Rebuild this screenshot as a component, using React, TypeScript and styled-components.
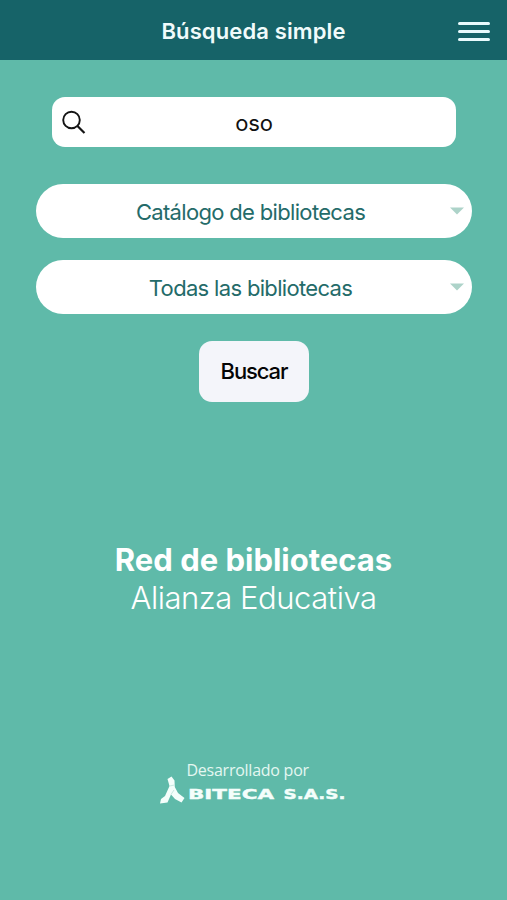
import React from 'react';
import styled, { createGlobalStyle } from 'styled-components';

const GlobalStyle = createGlobalStyle`
  * { box-sizing: border-box; }
  body { margin: 0; background: #5fbaa9; }
`;

const Screen = styled.div`
  width: 100%;
  height: 900px;
  overflow: hidden;
  display: flex;
  flex-direction: column;
  align-items: center;
  background: #5fbaa9;
  font-family: Inter, 'Liberation Sans', sans-serif;
`;

const Header = styled.header`
  width: 100%;
  height: 60px;
  flex: none;
  display: grid;
  grid-template-columns: 66px 1fr 66px;
  align-items: center;
  background: #166368;
  color: #f0fbfb;
`;

const Title = styled.h1`
  grid-column: 2;
  margin: 2px 0 0;
  font-size: 22px;
  line-height: 30px;
  font-weight: 600;
  letter-spacing: 0.12px;
  text-align: center;
  white-space: nowrap;
`;

const MenuButton = styled.button`
  display: flex;
  flex-direction: column;
  gap: 5px;
  width: 32px;
  margin: 2px 0 0 17px;
  padding: 0;
  border: 0;
  background: none;
`;

const MenuLine = styled.span`
  height: 3px;
  border-radius: 1.5px;
  background: #e9fbfd;
`;

const Form = styled.form`
  width: 436px;
  margin-top: 37px;
  display: flex;
  flex-direction: column;
  align-items: center;
`;

const SearchBox = styled.label`
  width: 404px;
  height: 50px;
  display: grid;
  grid-template-columns: 42px 1fr 42px;
  align-items: center;
  border-radius: 13px;
  background: #fff;
`;

const SearchIcon = styled.svg`
  width: 26px;
  height: 26px;
  margin-left: 9px;
`;

const SearchText = styled.span`
  padding: 1px 0 0 1px;
  font-size: 22px;
  color: #111;
  text-align: center;
  letter-spacing: -0.2px;
`;

const Select = styled.button<{ $gap: number }>`
  width: 436px;
  height: 54px;
  margin-top: ${(p) => p.$gap}px;
  padding: 2px 8px 0 0;
  display: grid;
  grid-template-columns: 16px 1fr 14px;
  align-items: center;
  border: 0;
  border-radius: 27px;
  background: #fff;
  color: #246b69;
  font-family: inherit;
  font-size: 22px;
  letter-spacing: -0.67px;
`;

const SelectLabel = styled.span`
  grid-column: 2;
`;

const Caret = styled.svg`
  width: 14px;
  height: 8px;
  margin-top: -3px;
`;

const Submit = styled.button`
  width: 110px;
  height: 61px;
  margin-top: 27px;
  padding: 0 0 2px 1px;
  border: 0;
  border-radius: 13px;
  background: #f4f5fa;
  color: #050505;
  font-family: inherit;
  font-size: 22px;
  font-weight: 500;
  letter-spacing: -1.1px;
`;

const Network = styled.section`
  margin-top: 139px;
  color: #fff;
  text-align: center;
  font-size: 31px;
  line-height: 38px;
  white-space: nowrap;
`;

const NetworkName = styled.div`
  font-weight: 700;
`;

const NetworkOwner = styled.div`
  font-weight: 300;
  letter-spacing: -0.45px;
`;

const Credit = styled.footer`
  width: 186px;
  margin-top: 144px;
  display: flex;
  flex-direction: column;
  color: #e4f7f1;
`;

const CreditText = styled.span`
  margin-left: 26px;
  font-family: 'Open Sans', sans-serif;
  font-size: 16px;
  font-weight: 500;
  letter-spacing: -0.25px;
  line-height: 18px;
  white-space: nowrap;
`;

const Logo = styled.svg`
  width: 186px;
  height: 28px;
  margin-top: -3px;
  overflow: visible;
`;

const Dropdown = ({ label, gap }: { label: string; gap: number }) => (
  <Select type="button" $gap={gap}>
    <SelectLabel>{label}</SelectLabel>
    <Caret viewBox="0 0 14 8">
      <path d="M0 0.5H14L7 7.5Z" fill="#add3c9" />
    </Caret>
  </Select>
);

export default function App() {
  return (
    <>
      <GlobalStyle />
      <Screen>
        <Header>
          <Title>Búsqueda simple</Title>
          <MenuButton aria-label="Menú">
            <MenuLine />
            <MenuLine />
            <MenuLine />
          </MenuButton>
        </Header>
        <Form>
          <SearchBox>
            <SearchIcon viewBox="0 0 26 26" fill="none" stroke="#141414" strokeWidth="1.9">
              <circle cx="10.5" cy="11" r="8.3" />
              <path d="M16.5 17L23.5 24" strokeWidth="2.2" />
            </SearchIcon>
            <SearchText>oso</SearchText>
          </SearchBox>
          <Dropdown label="Catálogo de bibliotecas" gap={37} />
          <Dropdown label="Todas las bibliotecas" gap={22} />
          <Submit type="button">Buscar</Submit>
        </Form>
        <Network>
          <NetworkName>Red de bibliotecas</NetworkName>
          <NetworkOwner>Alianza Educativa</NetworkOwner>
        </Network>
        <Credit>
          <CreditText>Desarrollado por</CreditText>
          <Logo viewBox="0 0 186 28" fill="#f4fefb">
            <path d="M6.5 3L10.5 0.5L13.5 4.5L13.8 11L17 17L23.5 22L20.5 26.5L14 23L10 18.5L6.5 26.5L-1 27.5L0 23L4 20L8.5 10Z" />
            <path d="M8.5 10L13.5 9M10 18.5L13 14" stroke="#b5e0d5" strokeWidth="0.7" fill="none" />
            <g fontFamily="DejaVu Sans" fontWeight="700" fontSize="14" stroke="#f4fefb" strokeWidth="0.4">
              <text x="27" y="22.8" textLength="86" lengthAdjust="spacingAndGlyphs">BITECA</text>
              <text x="122.5" y="22.8" textLength="62" lengthAdjust="spacingAndGlyphs">S.A.S.</text>
            </g>
          </Logo>
        </Credit>
      </Screen>
    </>
  );
}
